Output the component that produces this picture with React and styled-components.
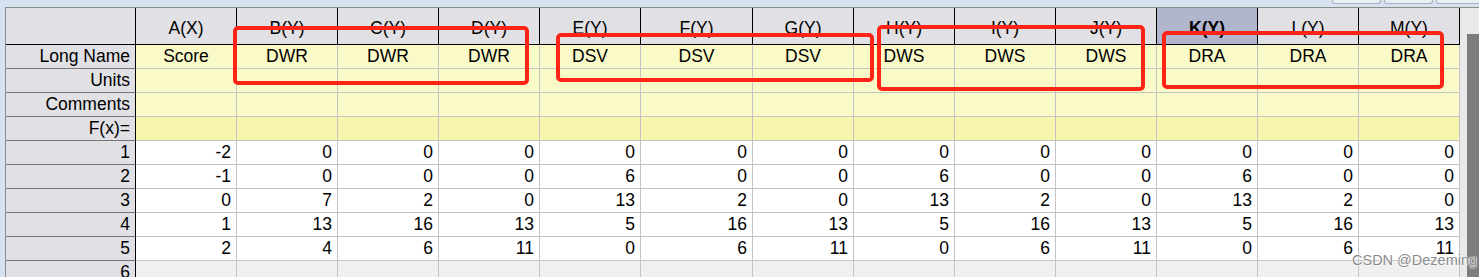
import React from "react";
import styled, { createGlobalStyle } from "styled-components";

const GlobalStyle = createGlobalStyle`
  html, body {
    margin: 0;
    padding: 0;
    background: #d6e2ef;
  }
  * {
    box-sizing: border-box;
  }
`;

// Worksheet data
const columns = [
  { name: "A(X)", longName: "Score", values: [-2, -1, 0, 1, 2] },
  { name: "B(Y)", longName: "DWR", values: [0, 0, 7, 13, 4] },
  { name: "C(Y)", longName: "DWR", values: [0, 0, 2, 16, 6] },
  { name: "D(Y)", longName: "DWR", values: [0, 0, 0, 13, 11] },
  { name: "E(Y)", longName: "DSV", values: [0, 6, 13, 5, 0] },
  { name: "F(Y)", longName: "DSV", values: [0, 0, 2, 16, 6] },
  { name: "G(Y)", longName: "DSV", values: [0, 0, 0, 13, 11] },
  { name: "H(Y)", longName: "DWS", values: [0, 6, 13, 5, 0] },
  { name: "I(Y)", longName: "DWS", values: [0, 0, 2, 16, 6] },
  { name: "J(Y)", longName: "DWS", values: [0, 0, 0, 13, 11] },
  { name: "K(Y)", longName: "DRA", values: [0, 6, 13, 5, 0], selected: true },
  { name: "L(Y)", longName: "DRA", values: [0, 0, 2, 16, 6] },
  { name: "M(Y)", longName: "DRA", values: [0, 0, 0, 13, 11] },
];

const labelRows = [
  { label: "Long Name", key: "longName", tone: "light" },
  { label: "Units", tone: "light" },
  { label: "Comments", tone: "light" },
  { label: "F(x)=", tone: "formula" },
];

// red marker boxes drawn over the sheet
const marks = [
  { x: 233, y: 26, w: 296, h: 59 },
  { x: 556, y: 33, w: 318, h: 49 },
  { x: 877, y: 25, w: 268, h: 66 },
  { x: 1162, y: 31, w: 282, h: 58 },
];

const App = () => {
  const rowCount = 6;
  return (
    <>
      <GlobalStyle />
      <Window>
        <TitleStrip>
          <TabStub />
          <TabStub />
          <TabStub $last />
        </TitleStrip>
        <Main>
          <Gutter />
          <Sheet>
            <Corner />
            {columns.map((col) => (
              <ColumnHeader key={col.name} $selected={col.selected}>
                {col.name}
              </ColumnHeader>
            ))}

            {labelRows.map((row) => (
              <React.Fragment key={row.label}>
                <RowLabel>{row.label}</RowLabel>
                {columns.map((col) => (
                  <LabelCell key={col.name} $tone={row.tone}>
                    {row.key ? col[row.key] : ""}
                  </LabelCell>
                ))}
              </React.Fragment>
            ))}

            {Array.from({ length: rowCount }).map((_, i) => (
              <React.Fragment key={i}>
                <RowLabel>{i + 1}</RowLabel>
                {columns.map((col) => (
                  <DataCell key={col.name} $empty={col.values[i] === undefined}>
                    {col.values[i]}
                  </DataCell>
                ))}
              </React.Fragment>
            ))}
          </Sheet>
          <Scrollbar>
            <Thumb />
          </Scrollbar>
        </Main>

        {marks.map((m, i) => (
          <Mark key={i} $x={m.x} $y={m.y} $w={m.w} $h={m.h} />
        ))}
        <Watermark>CSDN @Dezeming</Watermark>
      </Window>
    </>
  );
};

const Window = styled.div`
  position: relative;
  width: 1479px;
  height: 277px;
  overflow: hidden;
  background: #d6e2ef;
  display: flex;
  flex-direction: column;
  font-family: "Liberation Sans", Arial, sans-serif;
  font-size: 17.5px;
  color: #000;
`;

const TitleStrip = styled.div`
  height: 7px;
  display: flex;
  justify-content: flex-end;
  align-items: flex-end;
  gap: 3px;
  padding-bottom: 3px;
  margin-right: -10px;
`;

const TabStub = styled.div`
  width: ${(p) => (p.$last ? "53px" : "49px")};
  height: 4px;
  border: 1px solid #a9b3bf;
  border-top: none;
  border-radius: 0 0 3px 3px;
  background: #e9eef4;
`;

const Main = styled.div`
  flex: 1;
  display: flex;
  min-height: 0;
`;

const Gutter = styled.div`
  width: 5px;
`;

const Sheet = styled.div`
  display: grid;
  grid-template-columns: 130px repeat(5, 101px) 112px repeat(7, 101px);
  grid-auto-rows: 24px;
  grid-template-rows: 37px;
  border-top: 1px solid #8a8a8a;
  border-left: 1px solid #8a8a8a;
  align-content: start;
`;

const Corner = styled.div`
  background: #e1e0e5;
  border-right: 1px solid #000;
  border-bottom: 1px solid #000;
`;

const ColumnHeader = styled.div`
  display: flex;
  align-items: center;
  justify-content: center;
  padding-top: 4px;
  background: ${(p) => (p.$selected ? "#b2b6cd" : "#e1e0e5")};
  font-weight: ${(p) => (p.$selected ? "bold" : "normal")};
  border-right: 1px solid #000;
  border-bottom: 1px solid #000;
`;

const RowLabel = styled.div`
  display: flex;
  align-items: center;
  justify-content: flex-end;
  padding-right: 5px;
  background: #e1e0e5;
  border-right: 1px solid #000;
  border-bottom: 1px solid #777;
`;

const LabelCell = styled.div`
  display: flex;
  align-items: center;
  justify-content: center;
  background: ${(p) => (p.$tone === "formula" ? "#f7f4ae" : "#faf9c8")};
  border-right: 1px solid #c4c4c4;
  border-bottom: 1px solid #c4c4c4;
`;

const DataCell = styled.div`
  display: flex;
  align-items: center;
  justify-content: flex-end;
  padding-right: 5px;
  background: ${(p) => (p.$empty ? "#f0f0f0" : "#fff")};
  border-right: 1px solid #c4c4c4;
  border-bottom: 1px solid #c4c4c4;
`;

const Scrollbar = styled.div`
  flex: 1;
  display: flex;
  justify-content: flex-end;
  padding-top: 26px;
  background: #e9e9e9;
  border-top: 1px solid #8a8a8a;
`;

const Thumb = styled.div`
  width: 12px;
  height: 100%;
  background: #7d7d7d;
`;

const Mark = styled.div`
  position: absolute;
  left: ${(p) => p.$x}px;
  top: ${(p) => p.$y}px;
  width: ${(p) => p.$w}px;
  height: ${(p) => p.$h}px;
  border: 4px solid #ff2416;
  border-radius: 5px;
  pointer-events: none;
`;

const Watermark = styled.div`
  position: absolute;
  left: 1352px;
  top: 252px;
  font-family: "Liberation Sans", Arial, sans-serif;
  font-size: 14.5px;
  color: #8c8c8c;
  text-shadow: 0 0 2px #fff, 0 0 1px #fff, 0 0 1px #fff;
  white-space: nowrap;
  pointer-events: none;
`;

export default App;
